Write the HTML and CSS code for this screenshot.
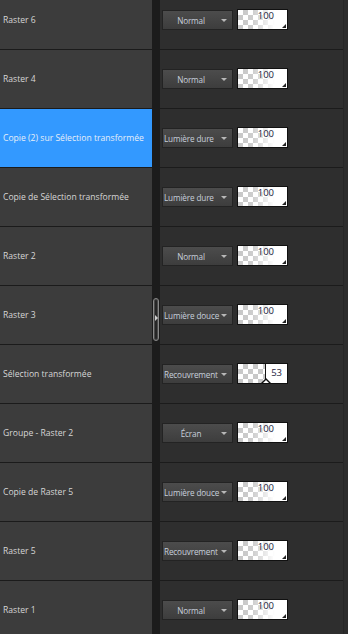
FILE: index.html
```html
<!DOCTYPE html>
<html>
<head>
<meta charset="utf-8">
<link rel="stylesheet" href="styles.css">
</head>
<body>
<div class="panel">
  <div class="names">
    <div class="list">
      <div class="name">Raster 6</div>
      <div class="name">Raster 4</div>
      <div class="name sel">Copie (2) sur Sélection transformée</div>
      <div class="name">Copie de Sélection transformée</div>
      <div class="name">Raster 2</div>
      <div class="name">Raster 3</div>
      <div class="name">Sélection transformée</div>
      <div class="name">Groupe - Raster 2</div>
      <div class="name">Copie de Raster 5</div>
      <div class="name">Raster 5</div>
      <div class="name">Raster 1</div>
    </div>
  </div>
  <div class="divider"><div class="handle"></div></div>
  <div class="props">
    <div class="list">
      <div class="prop"><div class="dd center"><span>Normal</span><i></i></div><div class="op"><b>100</b><em></em></div></div>
      <div class="prop"><div class="dd center"><span>Normal</span><i></i></div><div class="op"><b>100</b><em></em></div></div>
      <div class="prop"><div class="dd"><span>Lumière dure</span><i></i></div><div class="op"><b>100</b><em></em></div></div>
      <div class="prop"><div class="dd"><span>Lumière dure</span><i></i></div><div class="op"><b>100</b><em></em></div></div>
      <div class="prop"><div class="dd center"><span>Normal</span><i></i></div><div class="op"><b>100</b><em></em></div></div>
      <div class="prop"><div class="dd"><span>Lumière douce</span><i></i></div><div class="op"><b>100</b><em></em></div></div>
      <div class="prop"><div class="dd"><span>Recouvrement</span><i></i></div><div class="op half"><b>53</b><s></s></div></div>
      <div class="prop"><div class="dd center"><span>Écran</span><i></i></div><div class="op"><b>100</b><em></em></div></div>
      <div class="prop"><div class="dd"><span>Lumière douce</span><i></i></div><div class="op"><b>100</b><em></em></div></div>
      <div class="prop"><div class="dd"><span>Recouvrement</span><i></i></div><div class="op"><b>100</b><em></em></div></div>
      <div class="prop"><div class="dd center"><span>Normal</span><i></i></div><div class="op"><b>100</b><em></em></div></div>
    </div>
  </div>
  <div class="edge"></div>
</div>
</body>
</html>
```
FILE: styles.css
```css
html, body {
  margin: 0;
  padding: 0;
  background: #2e2e2e;
}
body {
  font-family: "Open Sans", "Noto Sans", sans-serif;
  font-size: 8.6px;
}
.panel {
  display: flex;
  width: 348px;
  height: 634px;
  overflow: hidden;
}
.names {
  width: 152px;
  background: #3c3c3c;
  overflow: hidden;
}
.list {
  margin-top: -9px;
  display: flex;
  flex-direction: column;
}
.name {
  height: 58px;
  border-bottom: 1px solid #1b1b1b;
  display: flex;
  align-items: center;
  padding-left: 3px;
  color: #d6d6d6;
  white-space: nowrap;
}
.name.sel {
  background: #3399ff;
  color: #e6eef8;
}
.divider {
  width: 8px;
  background: #1c1c1c;
  position: relative;
}
.handle {
  position: absolute;
  left: 1px;
  top: 298px;
  width: 4px;
  height: 41px;
  border: 1px solid #8a8a8a;
  border-radius: 3px;
  background: #262626;
  box-shadow: inset 0 0 0 1px #4a4a4a;
}
.handle::after {
  content: "";
  position: absolute;
  left: 1px;
  top: 16px;
  border-left: 3px solid #cfcfcf;
  border-top: 3px solid transparent;
  border-bottom: 3px solid transparent;
}
.props {
  width: 183px;
  overflow: hidden;
}
.prop {
  height: 58px;
  border-bottom: 1px solid #1b1b1b;
  display: flex;
  align-items: center;
  padding-left: 2px;
  gap: 4px;
}
.dd {
  width: 68px;
  height: 18px;
  border: 1px solid #232323;
  background: linear-gradient(#4c4c4c, #3d3d3d);
  display: flex;
  align-items: center;
  color: #c7cfdb;
  white-space: nowrap;
  position: relative;
  padding-left: 1px;
  font-size: 8.2px;
  letter-spacing: -0.15px;
}
.dd.center span {
  flex: 1;
  text-align: center;
  padding-right: 14px;
}
.dd i {
  position: absolute;
  right: 5px;
  top: 8px;
  border-top: 3px solid #b8b8b8;
  border-left: 3px solid transparent;
  border-right: 3px solid transparent;
}
.op {
  width: 49px;
  height: 19px;
  border: 1px solid #111;
  position: relative;
  background:
    linear-gradient(90deg, rgba(255,255,255,0) 0%, rgba(255,255,255,0.1) 30%, #fff 75%),
    conic-gradient(#c8c8c8 25%, #fff 0 50%, #c8c8c8 0 75%, #fff 0) 0 0 / 10px 10px;
  margin-top: -1px;
}
.op b {
  position: absolute;
  right: 13px;
  top: 0;
  font-weight: normal;
  font-size: 9.5px;
  color: #1c2440;
  line-height: 12px;
}
.op em {
  position: absolute;
  right: 1px;
  bottom: 1px;
  border-bottom: 4px solid #222;
  border-left: 4px solid transparent;
}
.op.half {
  background:
    linear-gradient(90deg, transparent 27px, #111 27px 28px, #fff 28px),
    conic-gradient(#c8c8c8 25%, #fff 0 50%, #c8c8c8 0 75%, #fff 0) 0 0 / 10px 10px;
}
.op.half b {
  right: 5px;
  top: 3px;
}
.op.half s {
  position: absolute;
  left: 23px;
  bottom: 0;
  width: 0;
  height: 0;
  border-bottom: 5px solid #111;
  border-left: 5px solid transparent;
  border-right: 5px solid transparent;
}
.op.half s::after {
  content: "";
  position: absolute;
  left: -3px;
  top: 2px;
  border-bottom: 3px solid #fff;
  border-left: 3px solid transparent;
  border-right: 3px solid transparent;
}
.edge {
  flex: 1;
  border-left: 1px solid #262626;
  background: #2c2c2c;
}
```
